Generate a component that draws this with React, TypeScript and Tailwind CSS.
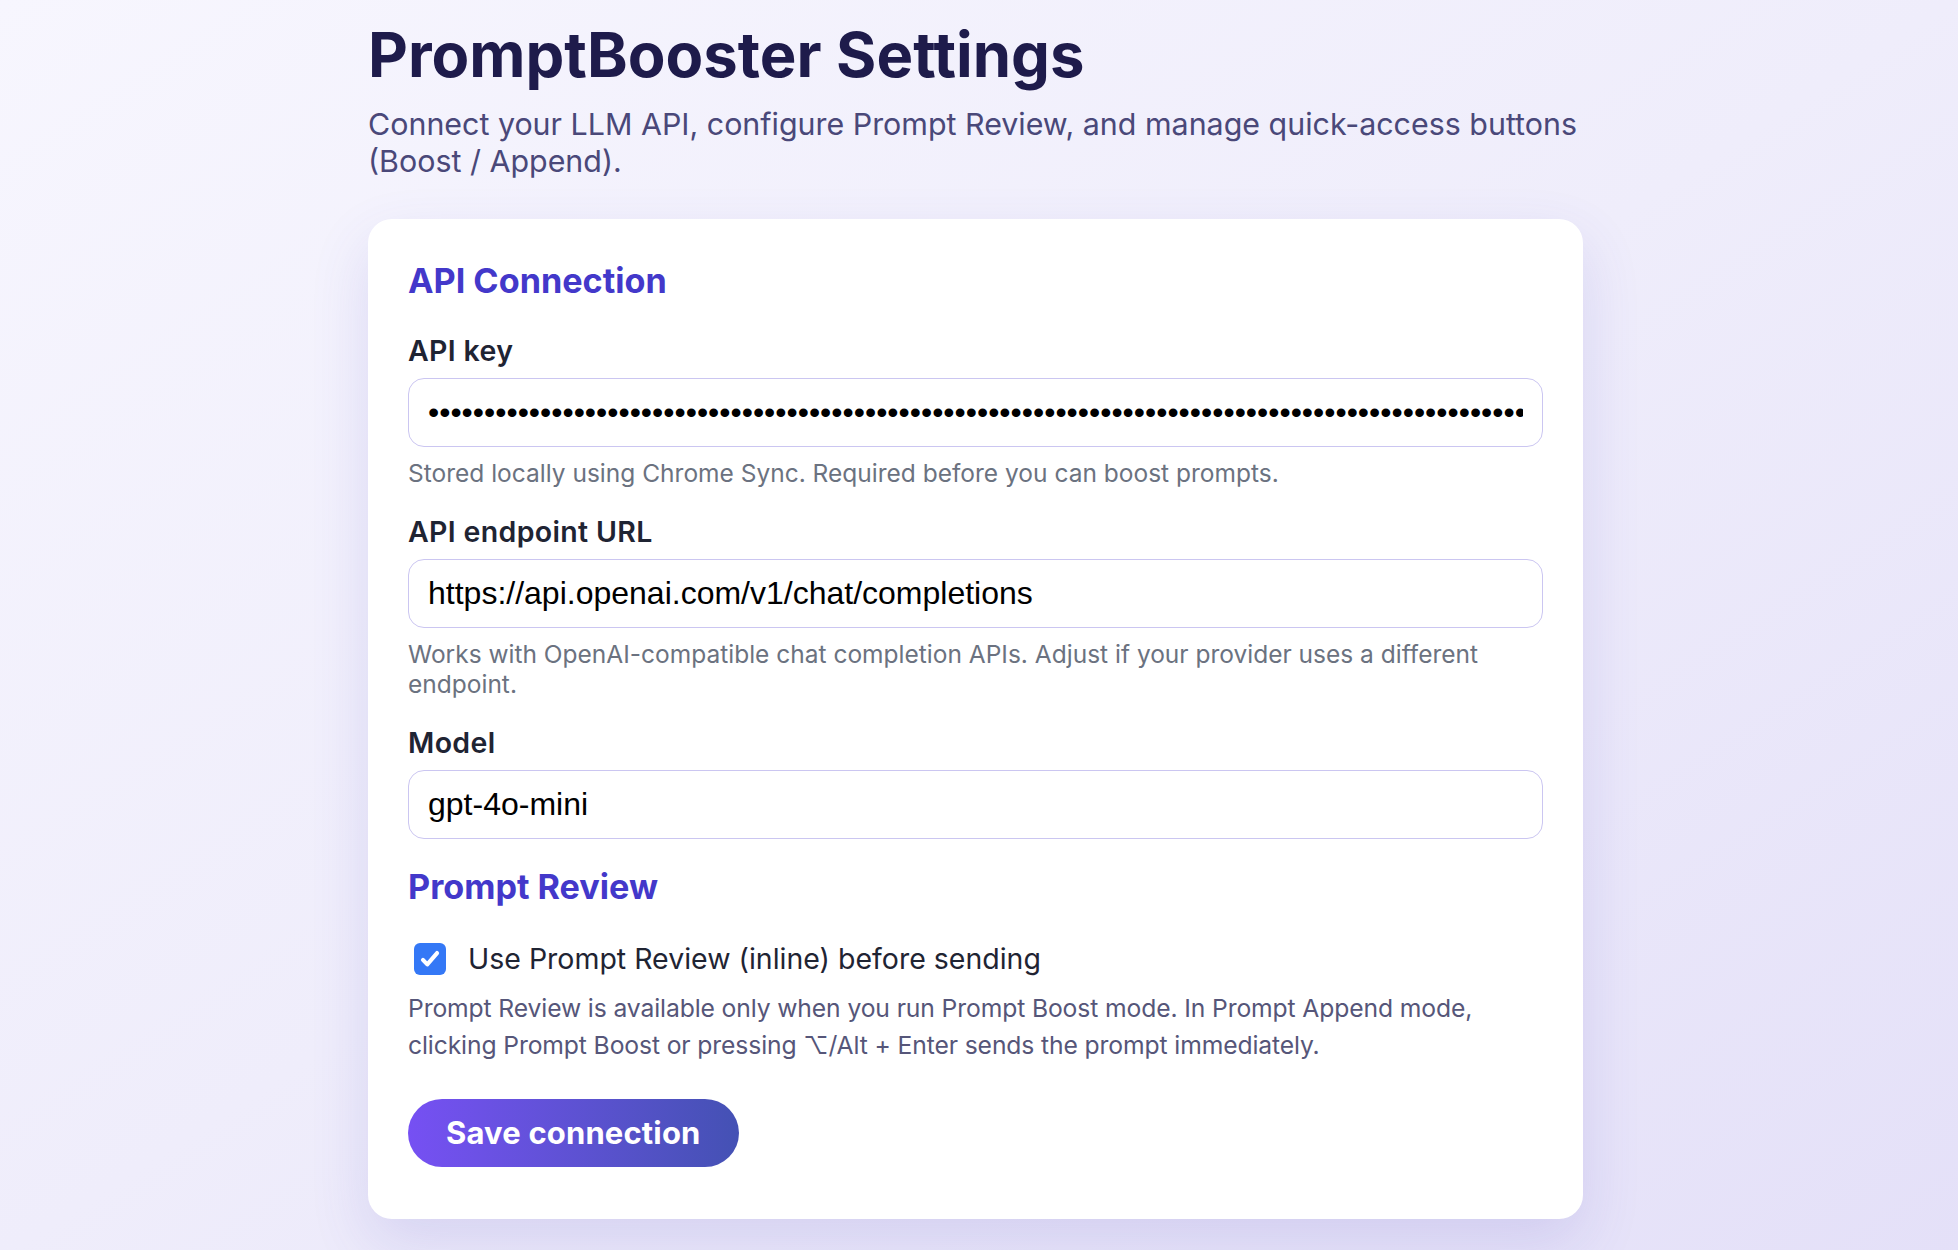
import React from "react";

const dots = "x".repeat(98);

function Field({
  label,
  children,
  hint,
}: {
  label: string;
  children: React.ReactNode;
  hint?: React.ReactNode;
}) {
  return (
    <div className="flex flex-col">
      <label className="text-[28.5px] leading-[34px] font-semibold text-[#1f2433] tracking-[0.012em]">
        {label}
      </label>
      <div className="mt-[10px]">{children}</div>
      {hint && (
        <p className="mt-[11px] text-[24.5px] leading-[30px] text-[#6b7280]">{hint}</p>
      )}
    </div>
  );
}

const inputCls =
  "w-full h-[69px] rounded-[16px] border-[1.5px] border-[#cbc6f1] bg-white px-[19px] text-[32px] text-black outline-none";

export default function App() {
  return (
    <div
      className="min-h-screen w-full bg-linear-to-br from-[#f7f6fe] via-[#efedfb] to-[#e4e0f8] pb-[40px]"
      style={{ fontFamily: "Inter, 'Noto Sans', sans-serif" }}
    >
      <div className="ml-[368px] w-[1215px] pt-[24px]">
        <h1 className="text-[61.6px] leading-[61px] font-bold text-[#1e1b4b]">
          PromptBooster Settings
        </h1>
        <p className="mt-[21px] text-[30.4px] leading-[37px] text-[#4a4879]">
          Connect your LLM API, configure Prompt Review, and manage quick-access buttons
          (Boost / Append).
        </p>

        <section className="mt-[39px] rounded-[24px] bg-white px-[40px] pt-[41px] pb-[52px] shadow-[0_24px_60px_rgba(80,70,190,0.14)]">
          <h2 className="text-[34.2px] leading-[42px] font-bold text-[#4338ca]">
            API Connection
          </h2>

          <div className="mt-[32px] flex flex-col gap-[27px]">
            <Field
              label="API key"
              hint="Stored locally using Chrome Sync. Required before you can boost prompts."
            >
              <input
                type="password"
                readOnly
                value={dots}
                className={inputCls}
                style={{ fontFamily: "'Liberation Sans', Arial, sans-serif" }}
              />
            </Field>
            <Field
              label="API endpoint URL"
              hint="Works with OpenAI-compatible chat completion APIs. Adjust if your provider uses a different endpoint."
            >
              <input
                type="text"
                readOnly
                value="https://api.openai.com/v1/chat/completions"
                className={inputCls}
                style={{ fontFamily: "'Liberation Sans', Arial, sans-serif" }}
              />
            </Field>
            <Field label="Model">
              <input
                type="text"
                readOnly
                value="gpt-4o-mini"
                className={inputCls}
                style={{ fontFamily: "'Liberation Sans', Arial, sans-serif" }}
              />
            </Field>
          </div>

          <h2 className="mt-[27px] text-[34.2px] leading-[42px] font-bold text-[#4338ca]">
            Prompt Review
          </h2>

          <label className="mt-[33px] flex items-center h-[36px]">
            <span className="ml-[6px] flex h-[32px] w-[32px] items-center justify-center rounded-[6px] bg-[#3478f6]">
              <svg viewBox="0 0 24 24" className="h-[26px] w-[26px]" fill="none">
                <path
                  d="M5.5 12.8l4 4.2L18.5 6.5"
                  stroke="white"
                  strokeWidth="3.8"
                  strokeLinecap="round"
                  strokeLinejoin="round"
                />
              </svg>
            </span>
            <span className="ml-[22px] text-[28.5px] leading-[36px] text-[#1f2433]">
              Use Prompt Review (inline) before sending
            </span>
          </label>

          <p className="mt-[13px] text-[24.7px] leading-[37px] text-[#565679] tracking-[-0.005em]">
            Prompt Review is available only when you run Prompt Boost mode. In Prompt Append mode,
            clicking Prompt Boost or pressing ⌥/Alt + Enter sends the prompt immediately.
          </p>

          <button className="mt-[35px] h-[68px] rounded-full bg-linear-to-r from-[#7650f3] to-[#4451b4] px-[38px] text-[31px] font-bold text-white tracking-[0.005em]">
            Save connection
          </button>
        </section>
      </div>
    </div>
  );
}
